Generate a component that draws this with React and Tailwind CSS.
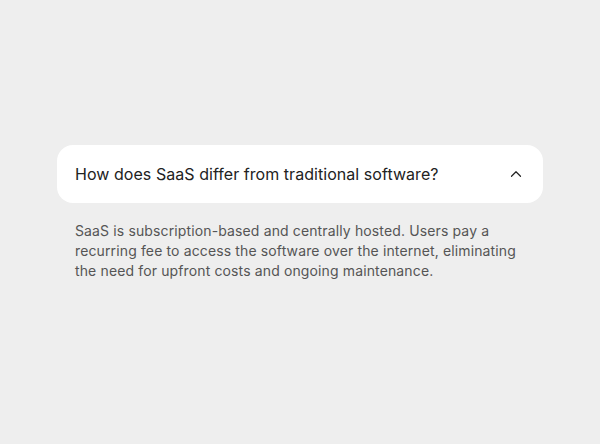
import { ChevronUp } from "lucide-react";

const App = () => {
  return (
    <div
      className="min-h-screen w-full bg-[#eeeeee] flex items-center justify-center"
      style={{ fontFamily: "Inter, 'Noto Sans', sans-serif" }}
    >
      <div className="w-[486px] flex flex-col">
        <button className="w-full bg-white rounded-[16px] px-[18px] py-[18px] flex items-center justify-between text-left">
          <span className="text-[16px] leading-[22px] text-[#222222] tracking-[0.05px]">
            How does SaaS differ from traditional software?
          </span>
          <ChevronUp className="w-[18px] h-[18px] text-[#222222]" strokeWidth={1.6} />
        </button>
        <div className="px-[18px] pt-[18px] pb-[18px]">
          <p className="text-[14px] leading-[20px] text-[#555555] tracking-[0.13px]">
            SaaS is subscription-based and centrally hosted. Users pay a recurring fee to access the
            software over the internet, eliminating the need for upfront costs and ongoing maintenance.
          </p>
        </div>
      </div>
    </div>
  );
};

export default App;
